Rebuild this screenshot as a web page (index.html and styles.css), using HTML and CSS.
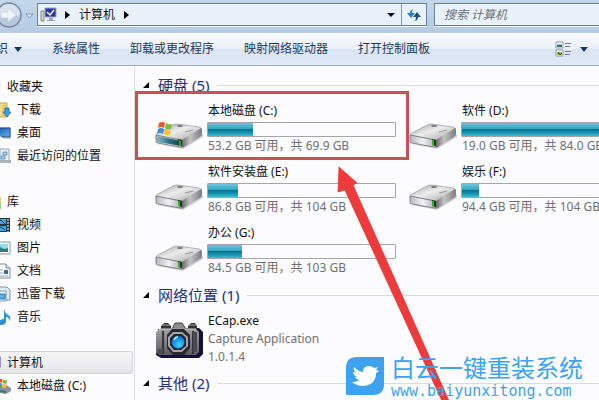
FILE: index.html
```html
<!DOCTYPE html>
<html lang="zh-CN">
<head>
    <meta charset="UTF-8">
    <meta name="viewport" content="width=device-width, initial-scale=1.0">
    <title>计算机</title>
    <link rel="stylesheet" href="styles.css">
</head>
<body>
    <!-- shared drawings -->
    <svg class="defs" aria-hidden="true">
        <defs>
            <linearGradient id="top" x1="0" y1="0" x2="1" y2="1">
                <stop offset="0" stop-color="#a0a0a0"/>
                <stop offset="0.45" stop-color="#ececec"/>
                <stop offset="1" stop-color="#a5a5a5"/>
            </linearGradient>
            <linearGradient id="side" x1="0" y1="0" x2="1" y2="0">
                <stop offset="0" stop-color="#6a6a6a"/>
                <stop offset="0.4" stop-color="#c4c4c4"/>
                <stop offset="1" stop-color="#7c7c7c"/>
            </linearGradient>
            <linearGradient id="front" x1="0" y1="0" x2="1" y2="0">
                <stop offset="0" stop-color="#b9b9c4"/>
                <stop offset="0.5" stop-color="#f0f0f6"/>
                <stop offset="1" stop-color="#a9a9b4"/>
            </linearGradient>
            <linearGradient id="front-sys" x1="0" y1="0" x2="1" y2="0">
                <stop offset="0" stop-color="#8fb4c4"/>
                <stop offset="0.5" stop-color="#27708c"/>
                <stop offset="1" stop-color="#16403c"/>
            </linearGradient>
            <linearGradient id="metal" x1="0" y1="0" x2="0" y2="1">
                <stop offset="0" stop-color="#a0a0a0"/>
                <stop offset="1" stop-color="#5c5c60"/>
            </linearGradient>
            <radialGradient id="lens" cx="0.6" cy="0.7" r="0.8">
                <stop offset="0" stop-color="#35d8ff"/>
                <stop offset="0.6" stop-color="#1788e0"/>
                <stop offset="1" stop-color="#0a3f90"/>
            </radialGradient>
            <linearGradient id="blue" x1="0" y1="0" x2="1" y2="1">
                <stop offset="0" stop-color="#1c4fa8"/>
                <stop offset="1" stop-color="#5db4ee"/>
            </linearGradient>
        </defs>
        <symbol id="flag" viewBox="0 0 16 16">
            <path d="M2 2q3-2 6 0L7 7Q4 5 1 7z" fill="#e5582c"/>
            <path d="M9 2q3 2 6 1l-1 5q-3 1-6-1z" fill="#7fba3a"/>
            <path d="M1 8q3-2 6 0l-1 5q-3-2-6 0z" fill="#3b8fd8"/>
            <path d="M8 8q3 2 6 1l-1 5q-3 1-6-1z" fill="#fbc32e"/>
        </symbol>
        <symbol id="drive" viewBox="0 0 48 48">
            <path d="M2 37l26 5 20-12v-3L28 38z" fill="#888" opacity="0.35"/>
            <path d="M1 28Q1 27 3 26L18 18q2-1 5-1l21 3q3 1 2 2L29 32q-1 1-3 1L3 29z" fill="url(#top)" stroke="#8a8a8a" stroke-width="0.6"/>
            <path d="M27 33l19-12q1 0 1 2v4q0 2-2 3L29 40q-1 1-2 0z" fill="url(#side)"/>
            <path d="M1 28l25 5q1 0 1 1v5q0 2-2 1L3 36q-2 0-2-2z" fill="url(#front)" stroke="#6d6d6d" stroke-width="0.8"/>
            <ellipse cx="25" cy="19" rx="3" ry="1" fill="#777"/>
            <path d="M30 25l8-2" stroke="#999"/>
            <path d="M23 32l4 1v6l-4-1z" fill="#173d17"/>
            <path d="M24 33v5" stroke="#4fd83a" stroke-width="1.4"/>
        </symbol>
        <symbol id="drive-sys" viewBox="0 0 48 48">
            <use href="#drive"/>
            <path d="M2 29l24 5v5L3 35q-1 0-1-1z" fill="url(#front-sys)"/>
            <path d="M25 34v5" stroke="#4fd83a" stroke-width="1.2"/>
            <use href="#flag" x="2" y="14" width="16" height="16"/>
        </symbol>
        <symbol id="camera" viewBox="0 0 48 48">
            <path d="M3 12l41-1 4 4v22l-4 4H6l-5-3z" fill="#16103c"/>
            <path d="M6 9l3-3h4l3 3v4H6zM33 9l3-3h4l2 3v4h-9z" fill="#333"/>
            <path d="M7 8h8M34 8h7" stroke="#aaa"/>
            <path d="M17 12l3-6h7l4 6z" fill="#8d8d90" stroke="#444"/>
            <path d="M1 15l4-3h36l3 3v20l-3 3H4l-3-3z" fill="url(#metal)"/>
            <path d="M1 15l4-3h36" fill="none" stroke="#ccc"/>
            <path d="M8 14v23M38 14v23" stroke="#33333a" stroke-width="2"/>
            <path d="M3 32h5v5H3zM38 15h4v20h-4z" fill="#4a4a52"/>
            <path d="M17 12h12l6 6v13l-6 7H18l-6-7V18z" fill="#28282e"/>
            <path d="M18 15h9l6 5v9l-6 6h-9l-5-6v-9z" fill="#a4a4ac"/>
            <path d="M19 17h8l4 4v8l-5 4h-7l-4-5v-7z" fill="#20242e"/>
            <circle cx="23" cy="25" r="6.5" fill="url(#lens)"/>
            <path d="M19 23q1-3 4-3" stroke="#a8ecff" fill="none" stroke-width="1.4"/>
        </symbol>
    </svg>

    <div class="window">
        <header class="address-row">
            <button class="forward" aria-label="前进">
                <svg width="26" height="26" viewBox="0 0 26 26">
                    <circle cx="13" cy="13" r="12" fill="#b9c9dc" stroke="#73879f" stroke-width="1.4"/>
                    <path d="M2 13a11 11 0 0 1 22 0q-11 4-22 0z" fill="#d9e3ee"/>
                    <path d="M5 10h7V6l8 7-8 7v-4H5z" fill="#edf2f7" stroke="#c3cfdd" stroke-width="0.6"/>
                </svg>
            </button>
            <button class="history" aria-label="最近的页面">
                <svg width="9" height="6" viewBox="0 0 9 6"><path d="M1 1h7L4.500 5z" fill="#dce8f5" stroke="#8397b3"/></svg>
            </button>
            <div class="address">
                <svg width="18" height="16" viewBox="0 0 18 16" aria-hidden="true">
                    <path d="M1 4h3v10H1z" fill="#d8d8d0" stroke="#85858a"/>
                    <path d="M5 1h11v9H5z" fill="#2238a8" stroke="#9da6bd"/>
                    <path d="M7 5l3 3 4-5" fill="none" stroke="#fff" stroke-width="1.500"/>
                    <path d="M9 11h4v2h2v1H7v-1h2z" fill="#9aa2ac"/>
                </svg>
                <svg class="crumb-arrow" width="5" height="8" viewBox="0 0 5 8"><path d="M0 0l5 4-5 4z"/></svg>
                <button class="crumb">计算机</button>
                <svg class="crumb-arrow" width="5" height="8" viewBox="0 0 5 8"><path d="M0 0l5 4-5 4z"/></svg>
                <button class="drop" aria-label="以前的位置">
                    <svg width="8" height="4" viewBox="0 0 8 4"><path d="M0 0h8L4 4z" fill="#0a0a33"/></svg>
                </button>
                <button class="refresh" aria-label="刷新">
                    <svg width="14" height="14" viewBox="0 0 14 14">
                        <path d="M6 1Q3 2 3 5H0l4 5 4-5H5Q5 3 6 1z" fill="#2f7fc4"/>
                        <path d="M8 13q3-1 3-4h3l-4-5-4 5h3q0 2-1 4z" fill="#1d4f8c"/>
                    </svg>
                </button>
            </div>
            <input class="search" type="search" aria-label="搜索 计算机" placeholder="搜索 计算机">
        </header>

        <nav class="toolbar" aria-label="工具栏">
            <button class="tool">组织
                <svg width="8" height="5" viewBox="0 0 8 5"><path d="M0 0h8L4 5z" fill="#1e395b"/></svg>
            </button>
            <button class="tool">系统属性</button>
            <button class="tool">卸载或更改程序</button>
            <button class="tool">映射网络驱动器</button>
            <button class="tool">打开控制面板</button>
            <button class="tool view" aria-label="更改您的视图">
                <svg width="17" height="16" viewBox="0 0 17 16">
                    <path d="M1 1h7v6H1zM1 9h7v6H1z" fill="#fff" stroke="#8a9aa8"/>
                    <path d="M2 4h5v2H2z" fill="#2e7d6b"/>
                    <path d="M2 3h5v1H2z" fill="#8cc4e8"/>
                    <path d="M2 11h5v3H2z" fill="#b5b83a"/>
                    <path d="M3 11l2 3 2-2" stroke="#333" fill="none"/>
                    <path d="M10 2.500h6M10 5.500h5M10 10.500h6M10 13.500h5" stroke="#6f7f90"/>
                </svg>
                <svg width="8" height="5" viewBox="0 0 8 5"><path d="M0 0h8L4 5z" fill="#1e395b"/></svg>
            </button>
        </nav>

        <div class="body">
            <nav class="sidebar" aria-label="导航窗格">
                <ul class="tree">
                    <li><a class="node root" href="#">
                        <svg width="16" height="16" viewBox="0 0 16 16"><path d="M8 1l2 4 6 1-5 4 1 5-4-3-4 3 1-5-5-4 6-1z" fill="#ef8a4a"/></svg>收藏夹</a></li>
                    <li><a class="node" href="#">
                        <svg width="16" height="16" viewBox="0 0 16 16">
                            <path d="M0 1h12v14H0z" fill="#f0dd8e" stroke="#c2a54a"/>
                            <path d="M7 3h4v12H7z" fill="#e3c867"/>
                            <path d="M10 6h4v4h2l-4 5-4-5h2z" fill="#35a0dc" stroke="#1b6fa5" stroke-width="0.8"/>
                        </svg>下载</a></li>
                    <li><a class="node" href="#">
                        <svg width="16" height="16" viewBox="0 0 16 16">
                            <path d="M0 2h16v12H0z" fill="#cfd6e0"/><path d="M0 3h15v9H0z" fill="url(#blue)" stroke="#24457c"/>
                            <path d="M5 11l4 3H4z" fill="#fff"/>
                        </svg>桌面</a></li>
                    <li><a class="node" href="#">
                        <svg width="16" height="16" viewBox="0 0 16 16">
                            <path d="M5 1h9v12H5z" fill="#e8f2fa" stroke="#8fa6ba"/>
                            <path d="M8 4h4v3H8zM6 8h4v3H6z" fill="#a8d0ee" stroke="#5b86aa" stroke-width="0.8"/>
                            <path d="M1 12h15v3H0z" fill="#aab3ba"/>
                        </svg>最近访问的位置</a></li>
                </ul>
                <ul class="tree">
                    <li><a class="node root" href="#">
                        <svg width="16" height="16" viewBox="0 0 16 16"><path d="M2 3h14v11H2z" fill="#e6cf7c"/><path d="M8 8h8v7H8z" fill="#9fcb8a"/></svg>库</a></li>
                    <li><a class="node" href="#">
                        <svg width="16" height="16" viewBox="0 0 16 16">
                            <path d="M0 1h15v14H0z" fill="#27343c"/><path d="M0 2h11v5H0zM0 9h11v5H0z" fill="#4ba4d4"/>
                            <path d="M2 6l4-3 4 4M2 13l4-3 4 3" stroke="#173a56" fill="none"/>
                            <path d="M13 2v13" stroke="#fff" stroke-dasharray="2 1"/>
                        </svg>视频</a></li>
                    <li><a class="node" href="#">
                        <svg width="16" height="16" viewBox="0 0 16 16">
                            <path d="M0 2h15v12H0z" fill="#fff" stroke="#8996a3"/><path d="M0 4h13v8H0z" fill="#9bd7ee"/>
                            <path d="M0 9l5-2 4 2 4-1v4H0z" fill="#2b7e8c"/>
                        </svg>图片</a></li>
                    <li><a class="node" href="#">
                        <svg width="16" height="16" viewBox="0 0 16 16">
                            <path d="M2 1h9l4 4v10H2z" fill="#fff" stroke="#7d8b98"/><path d="M11 1v4h4" fill="#dde5ec" stroke="#7d8b98"/>
                            <path d="M3 7h5M3 10h5M3 13h10" stroke="#8fa4b8"/><path d="M9 7h4v4H9z" fill="#356f9c"/>
                        </svg>文档</a></li>
                    <li><a class="node" href="#">
                        <svg width="16" height="16" viewBox="0 0 16 16">
                            <path d="M4 1h8l3 3v10H4z" fill="#dcedf8" stroke="#7794aa"/>
                            <path d="M1 5h10v10H1z" fill="#fff" stroke="#7794aa"/><path d="M2 8h8v5H2z" fill="#5cb0e4" stroke="#2f78ab"/>
                        </svg>迅雷下载</a></li>
                    <li><a class="node" href="#">
                        <svg width="16" height="16" viewBox="0 0 16 16">
                            <path d="M9 0q1 4 5 6 2 2 1 6-1-4-4-4v4q0 4-5 4-3 0-3-2 0-3 6-4z" fill="#2b8fd0"/>
                            <path d="M10 3q1 2 4 4" stroke="#8fd0f2" fill="none"/>
                        </svg>音乐</a></li>
                </ul>
                <ul class="tree">
                    <li><a class="node root current" href="#">
                        <svg width="16" height="16" viewBox="0 0 16 16"><path d="M1 2h15v10H1z" fill="#aaa4ec" stroke="#7f86a8"/></svg>计算机</a></li>
                    <li><a class="node" href="#">
                        <svg width="16" height="16" viewBox="0 0 16 16">
                            <path d="M0 9l9-3 7 4v3l-5 3-11-2z" fill="#8b9298"/><path d="M1 11l10 2v2L1 13z" fill="#2c7884"/>
                            <use href="#flag" x="2" y="0" width="11" height="11"/>
                        </svg>本地磁盘 (C:)</a></li>
                </ul>
            </nav>

            <main class="content">
                <section class="group">
                    <h2 class="group-title"><svg width="7" height="7" viewBox="0 0 7 7"><path d="M6 0v6H0z"/></svg>硬盘 (5)</h2>
                    <div class="tiles">
                        <article class="tile">
                            <svg width="48" height="48"><use href="#drive-sys"/></svg>
                            <div class="info">
                                <h3 class="name">本地磁盘 (C:)</h3>
                                <div class="bar"><div class="fill" style="width: 24%"></div></div>
                                <p class="detail">53.2 GB 可用，共 69.9 GB</p>
                            </div>
                        </article>
                        <article class="tile">
                            <svg width="48" height="48"><use href="#drive"/></svg>
                            <div class="info">
                                <h3 class="name">软件 (D:)</h3>
                                <div class="bar"><div class="fill" style="width: 77%"></div></div>
                                <p class="detail">19.0 GB 可用，共 84.0 GB</p>
                            </div>
                        </article>
                        <article class="tile">
                            <svg width="48" height="48"><use href="#drive"/></svg>
                            <div class="info">
                                <h3 class="name">软件安装盘 (E:)</h3>
                                <div class="bar"><div class="fill" style="width: 16%"></div></div>
                                <p class="detail">86.8 GB 可用，共 104 GB</p>
                            </div>
                        </article>
                        <article class="tile">
                            <svg width="48" height="48"><use href="#drive"/></svg>
                            <div class="info">
                                <h3 class="name">娱乐 (F:)</h3>
                                <div class="bar"><div class="fill" style="width: 9%"></div></div>
                                <p class="detail">94.4 GB 可用，共 104 GB</p>
                            </div>
                        </article>
                        <article class="tile">
                            <svg width="48" height="48"><use href="#drive"/></svg>
                            <div class="info">
                                <h3 class="name">办公 (G:)</h3>
                                <div class="bar"><div class="fill" style="width: 18%"></div></div>
                                <p class="detail">84.5 GB 可用，共 103 GB</p>
                            </div>
                        </article>
                    </div>
                </section>
                <section class="group">
                    <h2 class="group-title"><svg width="7" height="7" viewBox="0 0 7 7"><path d="M6 0v6H0z"/></svg>网络位置 (1)</h2>
                    <div class="tiles">
                        <article class="tile">
                            <svg width="48" height="48"><use href="#camera"/></svg>
                            <div class="info">
                                <h3 class="name">ECap.exe</h3>
                                <p class="detail">Capture Application</p>
                                <p class="detail">1.0.1.4</p>
                            </div>
                        </article>
                    </div>
                </section>
                <section class="group">
                    <h2 class="group-title"><svg width="7" height="7" viewBox="0 0 7 7"><path d="M6 0v6H0z"/></svg>其他 (2)</h2>
                </section>

                <!-- marks drawn over the file list -->
                <div class="mark-box"></div>
                <svg class="mark-arrow" width="114" height="234" viewBox="0 0 114 234" aria-hidden="true">
                    <path d="M3 0l18 16-4 2 96 216h-7L9 23l-7 2z" fill="#ee3a3a" stroke="#d83838" stroke-width="0.8"/>
                </svg>
            </main>
        </div>

        <div class="watermark">
            <svg width="38" height="38" viewBox="0 0 38 38" aria-hidden="true">
                <path d="M11 0h27v27q0 11-11 11H0V11Q0 0 11 0z" fill="#3da2f0"/>
                <path d="M8 10q5 5 9 5 0-6 6-6 3 0 5 2l4-1-2 3 3 1-3 2q0 12-13 13-6 0-11-4 5 0 7-2-3-1-4-3h2q-4-2-4-5l3 1q-3-3-2-6z" fill="#fff"/>
            </svg>
            <div class="brand">
                <span class="brand-name">白云一键重装系统</span>
                <span class="brand-url">www.baiyunxitong.com</span>
            </div>
        </div>
    </div>
</body>
</html>
```
FILE: styles.css
```css
* {
    box-sizing: border-box;
}

body {
    margin: 0;
    font-family: "Noto Sans", "Noto Sans CJK SC", sans-serif;
    font-size: 12px;
    line-height: 18px;
    color: #111;
    background-color: #fcfbfe;
}

h2, h3, p, ul {
    margin: 0;
    padding: 0;
    font-weight: normal;
}

button {
    padding: 0;
    border: 0;
    background: none;
    font: inherit;
    color: inherit;
    white-space: nowrap;
}

svg {
    display: block;
    flex-shrink: 0;
}

.defs {
    position: absolute;
    width: 0;
    height: 0;
}

.window {
    position: relative;
    display: flex;
    flex-direction: column;
    height: 100vh;
    overflow: hidden;
}

/* address bar */

.address-row {
    display: flex;
    align-items: center;
    height: 33px;
    padding-bottom: 4px;
    background: linear-gradient(#c3d6ea, #b4cce4);
}

.forward {
    margin-left: -4px;
}

.history {
    margin: 2px 3px 0;
}

.address {
    display: flex;
    flex: 1;
    align-items: center;
    gap: 8px;
    height: 23px;
    padding-left: 2px;
    border: 1px solid #6d7f95;
    background-color: #e9f1fb;
    box-shadow: 0 1px #f4f8fc;
}

.crumb-arrow {
    margin: 0 -1px;
}

.crumb {
    margin: 0 2px;
}

.drop {
    margin-left: auto;
}

.drop svg {
    margin-right: -2px;
}

.refresh {
    display: flex;
    align-items: center;
    justify-content: center;
    width: 25px;
    height: 21px;
    border-left: 1px solid #8094ad;
}

.search {
    width: 172px;
    height: 23px;
    margin: 0 -7px 0 7px;
    padding: 0 9px;
    border: 1px solid #6d7f95;
    border-radius: 0;
    background-color: #e9f1fb;
    box-shadow: 0 1px #f4f8fc;
    font: inherit;
    font-style: italic;
    appearance: none;
}

.search::placeholder {
    color: #6b7079;
}

/* toolbar */

.toolbar {
    display: flex;
    align-items: center;
    gap: 30px;
    height: 33px;
    padding-right: 11px;
    border-bottom: 1px solid #9fabbd;
    background: linear-gradient(#fbfdff, #e8effa 50%, #dae4f3 52%, #dfe8f5);
    color: #1e395b;
}

.tool {
    display: flex;
    align-items: center;
    gap: 6px;
}

.tool:first-child {
    margin-left: -16px;
}

.view {
    gap: 8px;
    margin-left: auto;
}

/* panes */

.body {
    display: flex;
    flex: 1;
    min-height: 0;
}

.sidebar {
    width: 135px;
    padding: 9px 1px 0 0;
    border-right: 1px solid #d6dfe9;
    overflow: hidden;
}

.tree {
    margin: 0 0 23px -15px;
    list-style: none;
}

.node {
    display: flex;
    align-items: center;
    gap: 6px;
    height: 23px;
    padding-left: 10px;
    color: inherit;
    text-decoration: none;
    white-space: nowrap;
}

.root {
    padding-left: 0;
}

.current {
    border: 1px solid #d5d5d8;
    border-left: 0;
    border-radius: 3px;
    background: linear-gradient(#f7f7f8, #e4e4e6);
}

.content {
    position: relative;
    flex: 1;
    min-width: 0;
    padding: 8px 0 0 8px;
    overflow: hidden;
}

.group {
    margin-bottom: 1px;
}

.group-title {
    display: flex;
    align-items: center;
    gap: 8px;
    height: 22px;
    margin-bottom: 4px;
    font-size: 15px;
    color: #1f2f7d;
    white-space: nowrap;
}

.group-title::after {
    content: "";
    flex: 1;
    height: 1px;
    background-color: #d9dde3;
}

.tiles {
    display: grid;
    grid-template-columns: repeat(2, 254px);
    padding-left: 12px;
}

.tile {
    display: flex;
    gap: 4px;
    align-items: center;
    height: 61px;
}

.info {
    width: 189px;
    height: 57px;
    white-space: nowrap;
}

.name {
    padding-left: 1px;
    font-size: 12px;
}

.detail {
    padding-left: 1px;
    color: #707073;
}

.bar {
    height: 15px;
    margin-top: 2px;
    border: 1px solid #a5a5a8;
    border-radius: 1px;
    background-color: #fcfcfe;
}

.fill {
    height: 100%;
    background: linear-gradient(#6cc5da, #35a5c2 45%, #087391 50%, #1a94b0 75%, #35c0d8);
}

/* marks over the list */

.mark-box {
    position: absolute;
    top: 25px;
    left: 0;
    width: 274px;
    height: 69px;
    border: 3px solid #c9504f;
}

.mark-arrow {
    position: absolute;
    top: 101px;
    left: 201px;
}

.watermark {
    position: absolute;
    right: 11px;
    bottom: 1px;
    display: flex;
    align-items: flex-start;
    gap: 7px;
    color: #3da2f0;
}

.brand {
    display: flex;
    flex-direction: column;
    gap: 4px;
    width: 197px;
    white-space: nowrap;
}

.brand-name {
    font-size: 24px;
    line-height: 22px;
}

.brand-url {
    font-family: "DejaVu Sans Mono", monospace;
    font-size: 15px;
    line-height: 16px;
}
```
